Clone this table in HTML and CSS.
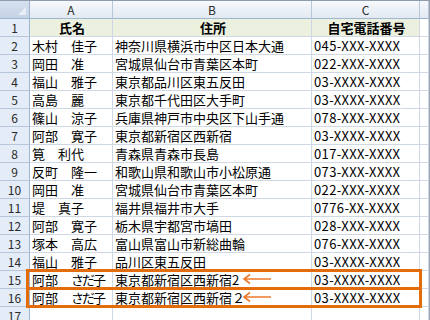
FILE: index.html
```html
<!DOCTYPE html>
<html lang="ja">
<head>
<meta charset="utf-8">
<title>重複データ</title>
<link rel="stylesheet" href="styles.css">
</head>
<body>
<div class="sheet">
  <div class="grid">
    <div class="corner"><span class="tri"></span></div>
    <div class="colhead">A</div>
    <div class="colhead">B</div>
    <div class="colhead">C</div>
    <div class="colhead"></div>

    <div class="rowhead">1</div><div class="cell title">氏名</div><div class="cell title">住所</div><div class="cell title">自宅電話番号</div><div class="cell"></div>
    <div class="rowhead">2</div><div class="cell">木村　佳子</div><div class="cell">神奈川県横浜市中区日本大通</div><div class="cell tel">045-XXX-XXXX</div><div class="cell"></div>
    <div class="rowhead">3</div><div class="cell">岡田　准</div><div class="cell">宮城県仙台市青葉区本町</div><div class="cell tel">022-XXX-XXXX</div><div class="cell"></div>
    <div class="rowhead">4</div><div class="cell">福山　雅子</div><div class="cell">東京都品川区東五反田</div><div class="cell tel">03-XXXX-XXXX</div><div class="cell"></div>
    <div class="rowhead">5</div><div class="cell">高島　麗</div><div class="cell">東京都千代田区大手町</div><div class="cell tel">03-XXXX-XXXX</div><div class="cell"></div>
    <div class="rowhead">6</div><div class="cell">篠山　涼子</div><div class="cell">兵庫県神戸市中央区下山手通</div><div class="cell tel">078-XXX-XXXX</div><div class="cell"></div>
    <div class="rowhead">7</div><div class="cell">阿部　寛子</div><div class="cell">東京都新宿区西新宿</div><div class="cell tel">03-XXXX-XXXX</div><div class="cell"></div>
    <div class="rowhead">8</div><div class="cell">筧　利代</div><div class="cell">青森県青森市長島</div><div class="cell tel">017-XXX-XXXX</div><div class="cell"></div>
    <div class="rowhead">9</div><div class="cell">反町　隆一</div><div class="cell">和歌山県和歌山市小松原通</div><div class="cell tel">073-XXX-XXXX</div><div class="cell"></div>
    <div class="rowhead">10</div><div class="cell">岡田　准</div><div class="cell">宮城県仙台市青葉区本町</div><div class="cell tel">022-XXX-XXXX</div><div class="cell"></div>
    <div class="rowhead">11</div><div class="cell">堤　真子</div><div class="cell">福井県福井市大手</div><div class="cell tel">0776-XX-XXXX</div><div class="cell"></div>
    <div class="rowhead">12</div><div class="cell">阿部　寛子</div><div class="cell">栃木県宇都宮市塙田</div><div class="cell tel">028-XXX-XXXX</div><div class="cell"></div>
    <div class="rowhead">13</div><div class="cell">塚本　高広</div><div class="cell">富山県富山市新総曲輪</div><div class="cell tel">076-XXX-XXXX</div><div class="cell"></div>
    <div class="rowhead">14</div><div class="cell">福山　雅子</div><div class="cell">品川区東五反田</div><div class="cell tel">03-XXXX-XXXX</div><div class="cell"></div>
    <div class="rowhead">15</div><div class="cell">阿部　<span class="kana">さだ子</span></div><div class="cell">東京都新宿区西新宿2</div><div class="cell tel">03-XXXX-XXXX</div><div class="cell"></div>
    <div class="rowhead">16</div><div class="cell">阿部　<span class="kana">さだ子</span></div><div class="cell">東京都新宿区西新宿２</div><div class="cell tel">03-XXXX-XXXX</div><div class="cell"></div>
    <div class="rowhead">17</div><div class="cell"></div><div class="cell"></div><div class="cell"></div><div class="cell"></div>
  </div>

  <div class="mark mark-15"></div>
  <div class="mark mark-16"></div>
  <svg class="arrow arrow-15" width="30" height="12" viewBox="0 0 30 12"><path d="M2 6H29M8 1.5L2 6L8 10.5" fill="none" stroke="#EE7B2C" stroke-width="1.6"/></svg>
  <svg class="arrow arrow-16" width="30" height="12" viewBox="0 0 30 12"><path d="M2 6H29M8 1.5L2 6L8 10.5" fill="none" stroke="#EE7B2C" stroke-width="1.6"/></svg>
</div>
</body>
</html>
```

FILE: styles.css
```css
* { box-sizing: border-box; }

body {
  margin: 0;
  background: #ffffff;
  font-family: "Noto Sans CJK JP", "Noto Sans", sans-serif;
}

.sheet {
  position: relative;
  width: 430px;
  height: 320px;
  overflow: hidden;
  border-top: 1px solid #8f9cae;
  border-right: 1px solid #9aa6b5;
  background: #ffffff;
}

.grid {
  display: grid;
  grid-template-columns: 30px 83px 199px 108px 9px;
  grid-template-rows: 18px;
  grid-auto-rows: 18px;
}

.corner {
  position: relative;
  background: linear-gradient(#d6e1ee, #c4d3e6);
  border-right: 1px solid #9eb6ce;
  border-bottom: 1px solid #9eb6ce;
}

.tri {
  position: absolute;
  right: 3px;
  bottom: 3px;
  width: 0;
  height: 0;
  border-left: 8px solid transparent;
  border-bottom: 8px solid #e9eef5;
}

.colhead {
  background: linear-gradient(#f7f9fc, #e2e9f2);
  border-right: 1px solid #b7c6d8;
  border-bottom: 1px solid #9eb6ce;
  font-size: 12px;
  line-height: 17px;
  text-align: center;
  color: #2b2b2b;
}

.rowhead {
  background: #e4ecf7;
  border-right: 1px solid #9eb6ce;
  border-bottom: 1px solid #b7c6d8;
  font-size: 12px;
  line-height: 17px;
  text-align: center;
  color: #2b2b2b;
}

.cell {
  border-right: 1px solid #d0d7e5;
  border-bottom: 1px solid #d0d7e5;
  font-size: 13px;
  line-height: 17px;
  padding-left: 2px;
  white-space: nowrap;
  overflow: hidden;
  color: #000000;
}

.cell.title {
  background: #ebf1de;
  font-weight: 700;
  text-align: center;
}

.cell.tel {
  letter-spacing: 0.4px;
}

.kana {
  letter-spacing: -2px;
}

.mark {
  position: absolute;
  left: 26px;
  width: 396px;
  height: 21px;
  border: 3px solid #e46c0a;
}

.mark-15 { top: 268px; }
.mark-16 { top: 286px; }

.arrow {
  position: absolute;
  left: 242px;
}

.arrow-15 { top: 272px; }
.arrow-16 { top: 290px; }
```
